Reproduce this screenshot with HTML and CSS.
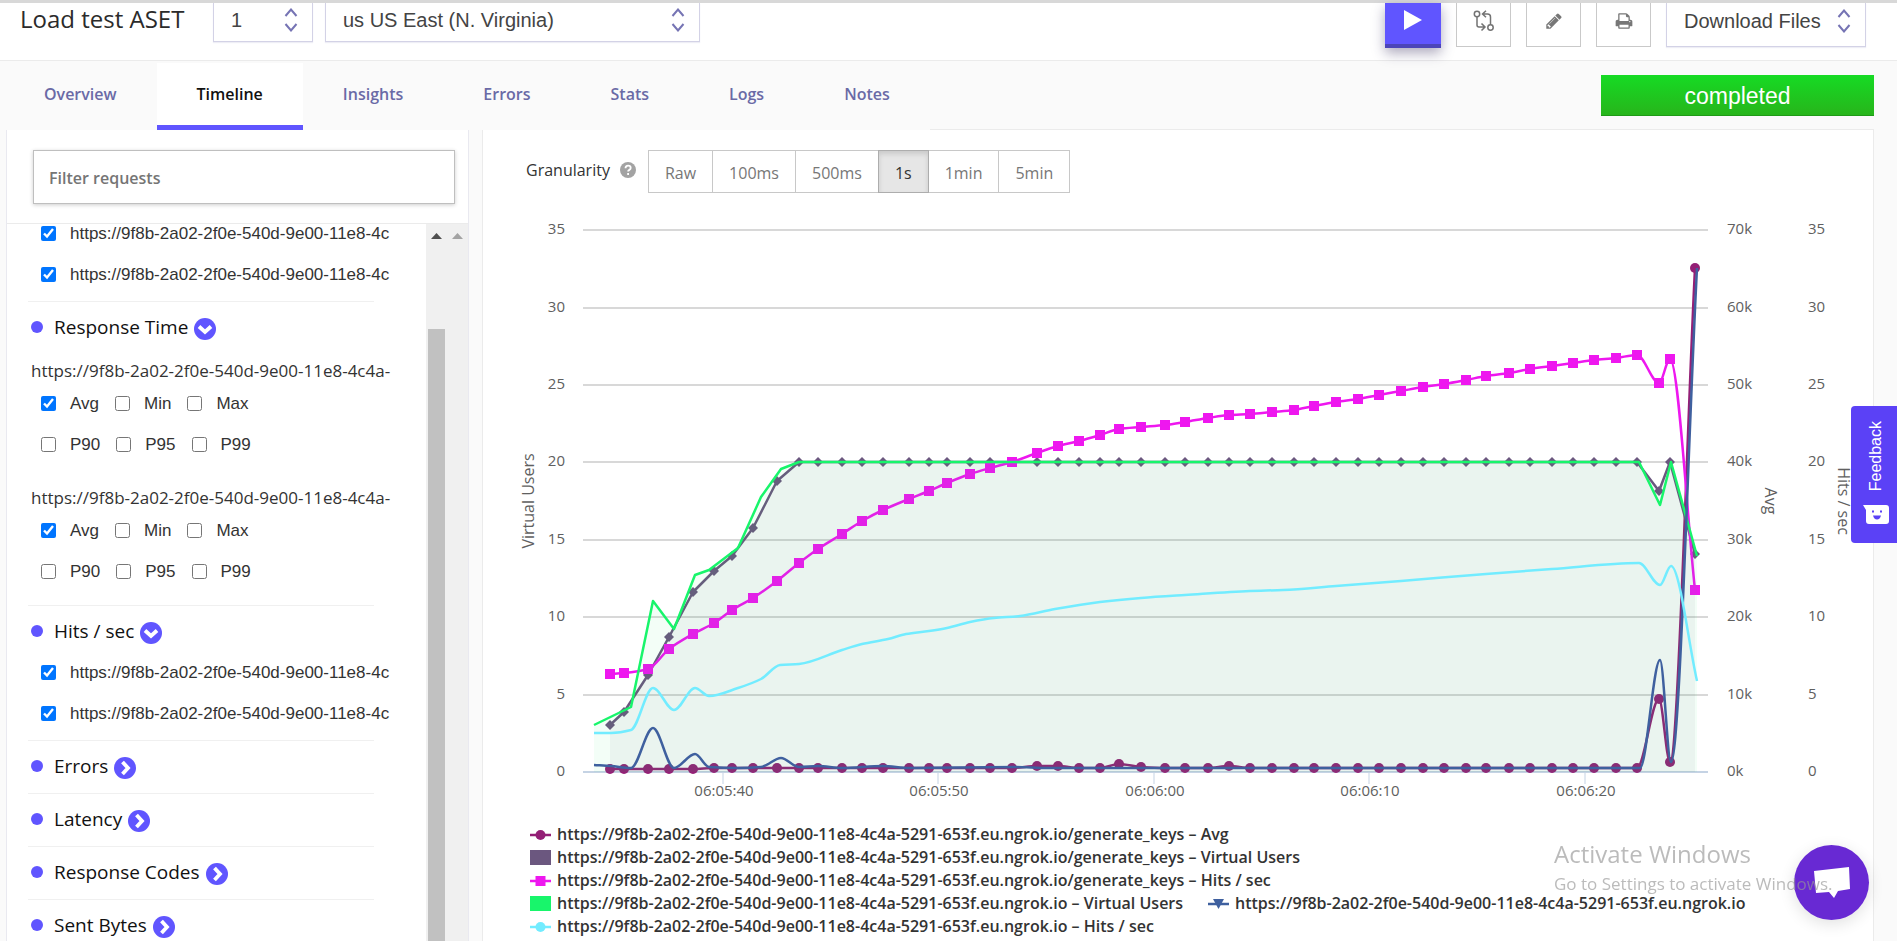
FILE: index.html
```html
<!DOCTYPE html>
<html lang="en">
<head>
<meta charset="utf-8">
<title>Load test ASET</title>
<link rel="stylesheet" href="styles.css">
</head>
<body>
<svg class="defs" aria-hidden="true">
  <symbol id="updown" viewBox="0 0 14 24"><path d="M1.500 8 7 1.500 12.500 8M1.500 16 7 22.500 12.500 16" fill="none" stroke="#7674b4" stroke-width="2"/></symbol>
  <symbol id="down" viewBox="0 0 22 22"><circle cx="11" cy="11" r="11" fill="#6055ff"/><path d="M5 8.500 11 14l6-5.500" fill="none" stroke="#fff" stroke-width="3.800"/></symbol>
  <symbol id="right" viewBox="0 0 22 22"><circle cx="11" cy="11" r="11" fill="#6055ff"/><path d="M8.500 5 14 11l-5.500 6" fill="none" stroke="#fff" stroke-width="3.800"/></symbol>
</svg>

<header class="topbar">
  <h1 class="title">Load test ASET</h1>
  <div class="picker picker-run">
    <select aria-label="Run"><option>1</option></select>
    <svg class="updown"><use href="#updown"/></svg>
  </div>
  <div class="picker picker-region">
    <select aria-label="Region"><option>us US East (N. Virginia)</option></select>
    <svg class="updown"><use href="#updown"/></svg>
  </div>
  <div class="actions">
    <button class="play" aria-label="Run test"><svg width="20" height="22" viewBox="0 0 20 22"><path d="M1 1v20L19 11z" fill="#fff"/></svg></button>
    <button class="tool" aria-label="Compare"><svg width="22" height="22" viewBox="0 0 22 22" fill="none" stroke="#737373" stroke-width="1.500"><circle cx="4" cy="4" r="2.700"/><circle cx="17.500" cy="17.500" r="2.700"/><path d="M4 7v8q0 2 2 2h5M8.500 13.500l3.500 3.500-3.500 3.500M17.500 15V7q0-3-3-3H10M13 .7 9.500 4 13 7.300"/></svg></button>
    <button class="tool" aria-label="Edit"><svg width="18" height="18" viewBox="0 0 1792 1792" fill="#777"><path d="M491 1536l91-91-235-235-91 91v107h128v128h107zM1014 608q0-22-22-22-10 0-17 7l-542 542q-7 7-7 17 0 22 22 22 10 0 17-7l542-542q7-7 7-17zM960 416l416 416-832 832h-416v-416zM1643 512q0 53-37 90l-166 166-416-416 166-165q36-38 90-38 53 0 91 38l235 234q37 39 37 91z"/></svg></button>
    <button class="tool" aria-label="Print"><svg width="18" height="18" viewBox="0 0 1792 1792" fill="#777"><path d="M448 1536h896v-256h-896v256zM448 896h896v-384h-160q-40 0-68-28t-28-68v-160h-640v640zM1536 960q0-26-19-45t-45-19-45 19-19 45 19 45 45 19 45-19 19-45zM1728 960v416q0 13-9.500 22.500t-22.500 9.500h-224v160q0 40-28 68t-68 28h-960q-40 0-68-28t-28-68v-160h-224q-13 0-22.500-9.500t-9.500-22.500v-416q0-79 56.500-135.500t135.500-56.500h64v-544q0-40 28-68t68-28h672q40 0 88 20t76 48l152 152q28 28 48 76t20 88v256h64q79 0 135.500 56.500t56.500 135.500z"/></svg></button>
    <div class="picker picker-files">
      <select aria-label="Download files"><option>Download Files</option></select>
      <svg class="updown"><use href="#updown"/></svg>
    </div>
  </div>
</header>

<div class="tabbar">
  <nav class="tabs">
    <a href="#">Overview</a>
    <a href="#" class="current">Timeline</a>
    <a href="#">Insights</a>
    <a href="#">Errors</a>
    <a href="#">Stats</a>
    <a href="#">Logs</a>
    <a href="#">Notes</a>
  </nav>
  <div class="status">completed</div>
</div>

<main class="content">
  <aside class="sidebar">
    <div class="filter"><input type="text" placeholder="Filter requests" aria-label="Filter requests"></div>
    <div class="scroller">
      <div class="metrics">
        <section class="metric scrolled">
          <div class="row"><label><input type="checkbox" checked>https://9f8b-2a02-2f0e-540d-9e00-11e8-4c</label></div>
          <div class="row"><label><input type="checkbox" checked>https://9f8b-2a02-2f0e-540d-9e00-11e8-4c</label></div>
        </section>
        <section class="metric grouped">
          <h2>Response Time<button aria-label="Collapse"><svg width="22" height="22"><use href="#down"/></svg></button></h2>
          <div class="group">
            <h3>https://9f8b-2a02-2f0e-540d-9e00-11e8-4c4a-</h3>
            <div class="row"><label><input type="checkbox" checked>Avg</label><label><input type="checkbox">Min</label><label><input type="checkbox">Max</label></div>
            <div class="row"><label><input type="checkbox">P90</label><label><input type="checkbox">P95</label><label><input type="checkbox">P99</label></div>
          </div>
          <div class="group">
            <h3>https://9f8b-2a02-2f0e-540d-9e00-11e8-4c4a-</h3>
            <div class="row"><label><input type="checkbox" checked>Avg</label><label><input type="checkbox">Min</label><label><input type="checkbox">Max</label></div>
            <div class="row"><label><input type="checkbox">P90</label><label><input type="checkbox">P95</label><label><input type="checkbox">P99</label></div>
          </div>
        </section>
        <section class="metric">
          <h2>Hits / sec<button aria-label="Collapse"><svg width="22" height="22"><use href="#down"/></svg></button></h2>
          <div class="row"><label><input type="checkbox" checked>https://9f8b-2a02-2f0e-540d-9e00-11e8-4c</label></div>
          <div class="row"><label><input type="checkbox" checked>https://9f8b-2a02-2f0e-540d-9e00-11e8-4c</label></div>
        </section>
        <section class="metric"><h2>Errors<button aria-label="Expand"><svg width="22" height="22"><use href="#right"/></svg></button></h2></section>
        <section class="metric"><h2>Latency<button aria-label="Expand"><svg width="22" height="22"><use href="#right"/></svg></button></h2></section>
        <section class="metric"><h2>Response Codes<button aria-label="Expand"><svg width="22" height="22"><use href="#right"/></svg></button></h2></section>
        <section class="metric"><h2>Sent Bytes<button aria-label="Expand"><svg width="22" height="22"><use href="#right"/></svg></button></h2></section>
      </div>
      <div class="track">
        <svg width="11" height="6"><path d="M0 6 5.500 0 11 6z" fill="#505050"/></svg>
        <div class="thumb"></div>
      </div>
      <div class="track">
        <svg width="11" height="6"><path d="M0 6 5.500 0 11 6z" fill="#a3a3a3"/></svg>
      </div>
    </div>
  </aside>

  <section class="panel">
    <div class="granularity">
      <span class="caption">Granularity</span>
      <svg class="help" width="16" height="16" viewBox="0 0 16 16"><circle cx="8" cy="8" r="8" fill="#a3a3a3"/><path d="M5.500 6.300q0-2.600 2.600-2.600t2.600 2.300q0 1.200-1.300 1.900T8.100 9.600M8.100 11v2" fill="none" stroke="#fff" stroke-width="1.800"/></svg>
      <div class="segmented">
        <button>Raw</button><button>100ms</button><button>500ms</button><button class="active">1s</button><button>1min</button><button>5min</button>
      </div>
    </div>
    <svg class="chart" id="chart" viewBox="483 205 1390 610" role="img" aria-label="Virtual users, response time and hits per second"></svg>
    <ul class="legend">
      <li><span><svg width="21" height="16"><path d="M0 8h21" stroke="#941f76" stroke-width="2.500"/><circle cx="10.500" cy="8" r="5" fill="#941f76"/></svg>https://9f8b-2a02-2f0e-540d-9e00-11e8-4c4a-5291-653f.eu.ngrok.io/generate_keys – Avg</span></li>
      <li><span><svg width="21" height="16"><path d="M0 0h21v15H0z" fill="#6b577f"/></svg>https://9f8b-2a02-2f0e-540d-9e00-11e8-4c4a-5291-653f.eu.ngrok.io/generate_keys – Virtual Users</span></li>
      <li><span><svg width="21" height="16"><path d="M0 8h21" stroke="#ee17ef" stroke-width="2.500"/><path d="M5.500 3h10v10h-10z" fill="#ee17ef"/></svg>https://9f8b-2a02-2f0e-540d-9e00-11e8-4c4a-5291-653f.eu.ngrok.io/generate_keys – Hits / sec</span></li>
      <li><span><svg width="21" height="16"><path d="M0 0h21v15H0z" fill="#18f56b"/></svg>https://9f8b-2a02-2f0e-540d-9e00-11e8-4c4a-5291-653f.eu.ngrok.io – Virtual Users</span><span><svg width="21" height="16"><path d="M0 8h21" stroke="#3f609f" stroke-width="2.500"/><path d="M5 3h11l-5.500 10z" fill="#3f609f"/></svg>https://9f8b-2a02-2f0e-540d-9e00-11e8-4c4a-5291-653f.eu.ngrok.io</span></li>
      <li><span><svg width="21" height="16"><path d="M0 8h21" stroke="#72ecff" stroke-width="2.500"/><circle cx="10.500" cy="8" r="5" fill="#72ecff"/></svg>https://9f8b-2a02-2f0e-540d-9e00-11e8-4c4a-5291-653f.eu.ngrok.io – Hits / sec</span></li>
    </ul>
  </section>
</main>

<button class="feedback">
  <span>Feedback</span>
  <svg width="26" height="19" viewBox="0 0 26 19"><path d="M0 0h23q3 0 3 3v13q0 3-3 3H6q-3 0-3-3V5z" fill="#fff"/><path d="M9 6.500h2M17 6.500h2" stroke="#5b41f6" stroke-width="2"/><path d="M10 10.500h8q-1 4-4 4t-4-4z" fill="#5b41f6"/></svg>
</button>
<button class="chat" aria-label="Open chat"><svg width="36" height="32" viewBox="0 0 36 32"><path d="M0 4 35 0 36 22 24 24 20 31 15 25 2 26z" fill="#fff"/></svg></button>
<div class="watermark"><p class="watermark-title">Activate Windows</p><p>Go to Settings to activate Windows.</p></div>
<script src="chart.js"></script>
</body>
</html>
```
FILE: styles.css
```css
* { box-sizing: border-box; }

body {
  margin: 0;
  height: 100vh;
  display: flex;
  flex-direction: column;
  overflow: hidden;
  background: #fafafa;
  color: #333;
  font-family: "Open Sans", "Noto Sans", sans-serif;
}

h1, h2, h3, p, ul { margin: 0; padding: 0; font-weight: 400; }
button { margin: 0; padding: 0; font: inherit; }
.defs { display: none; }

/* Top bar */
.topbar {
  flex: none;
  display: flex;
  align-items: flex-start;
  height: 61px;
  padding: 0 31px 0 20px;
  border-top: 3px solid #d8d8d8;
  border-bottom: 1px solid #ebebeb;
  background: #fff;
}
.title {
  width: 193px;
  font-size: 24px;
  line-height: 32px;
  font-weight: 500;
  white-space: nowrap;
  color: #2b2b2b;
}
.picker { position: relative; }
.picker select {
  display: block;
  width: 100%;
  height: 100%;
  padding: 0 17px;
  appearance: none;
  border: 1px solid #d3d2e6;
  border-top: 0;
  border-radius: 0;
  background: #fff;
  box-shadow: 0 1px 1px #eeeef5;
  font: 20px "Liberation Sans", Arial, sans-serif;
  color: #444;
}
.updown {
  position: absolute;
  top: 5px;
  right: 15px;
  width: 14px;
  height: 24px;
  pointer-events: none;
}
.picker-run { width: 100px; height: 39px; margin-right: 12px; }
.picker-run select, .picker-region select { padding-bottom: 5px; }
.picker-region { width: 375px; height: 39px; }
.picker-files { width: 200px; height: 44px; }
.picker-files select { padding-bottom: 8px; }
.picker-files .updown { top: 6px; }
.actions { display: flex; gap: 15px; margin-left: auto; }
.play, .tool { display: flex; justify-content: center; }
.play {
  width: 56px;
  height: 45px;
  padding-top: 6px;
  border: 0;
  border-bottom: 4px solid #4c45b8;
  background: #6055ff;
  box-shadow: 0 5px 12px rgba(50, 40, 90, .4);
}
.tool {
  width: 55px;
  height: 44px;
  padding-bottom: 8px;
  align-items: center;
  border: 1px solid #c9c9c9;
  border-top: 0;
  background: #fff;
}

/* Tabs */
.tabbar {
  flex: none;
  display: flex;
  justify-content: space-between;
  height: 69px;
  padding: 2px 23px 0 4px;
}
.tabs {
  position: relative;
  z-index: 1;
  display: flex;
  background: #fafafa;
}
.tabs a {
  padding: 0 40px;
  font-size: 16px;
  line-height: 63px;
  font-weight: 600;
  text-decoration: none;
  color: #6a6aa6;
}
.tabs .current {
  border-bottom: 5px solid #6055ff;
  background: #fff;
  color: #111;
}
.status {
  align-self: flex-start;
  width: 273px;
  height: 41px;
  margin-top: 12px;
  border-bottom: 1px solid #1f9a17;
  background: linear-gradient(#16db24, #27b51b);
  font: 23px/42px "Liberation Sans", Arial, sans-serif;
  text-align: center;
  color: #fff;
}

/* Layout */
.content {
  flex: 1;
  min-height: 0;
  display: flex;
  gap: 13px;
  margin-top: -1px;
  padding: 0 23px 0 6px;
}

/* Sidebar */
.sidebar {
  flex: none;
  width: 463px;
  display: flex;
  flex-direction: column;
  border: solid #e9e9f0;
  border-width: 0 1px;
  background: #fff;
}
.filter { padding: 21px 13px 19px 26px; border-bottom: 1px solid #ebebeb; }
.filter input {
  display: block;
  width: 100%;
  height: 54px;
  padding: 1px 15px 0;
  border: 1px solid #bfbfbf;
  box-shadow: 0 1px 4px rgba(0, 0, 0, .2);
  font: 600 16px "Open Sans", sans-serif;
  color: #333;
}
.filter input::placeholder { color: #757575; }
.scroller { flex: 1; min-height: 0; display: flex; overflow: hidden; }
.metrics { flex: 1; min-width: 0; padding: 0 21px; }
.metric {
  position: relative;
  padding: 0 0 6px 3px;
}
.metric::after {
  content: "";
  display: block;
  margin: 6px 31px -7px -3px;
  border-bottom: 1px solid #f0f0f0;
}
.metric + .metric { padding-top: 1px; }
.scrolled { margin-top: -11px; }
.grouped { padding-bottom: 13px; }
.grouped::after { margin: 13px 31px -14px -3px; }
.metric h2 {
  display: flex;
  align-items: center;
  height: 46px;
  padding-top: 4px;
  font-size: 19px;
  color: #111;
}
.metric h2::before {
  content: "";
  width: 12px;
  height: 12px;
  margin-right: 11px;
  border-radius: 50%;
  background: #6055ff;
}
.metric h2 button {
  display: flex;
  margin: 4px 0 0 6px;
  border: 0;
  background: none;
}
.metric h3 {
  padding-top: 10px;
  font-size: 17px;
  line-height: 25px;
  font-weight: 500;
  white-space: nowrap;
}
.group + .group { padding-top: 10px; }
.row {
  display: flex;
  gap: 16px;
  height: 41px;
  padding-left: 10px;
  font: 17px "Liberation Sans", Arial, sans-serif;
  white-space: nowrap;
}
.row label { display: flex; align-items: center; gap: 14px; }
.row input { flex: none; width: 15px; height: 15px; margin: 0; }
.track {
  flex: none;
  width: 21px;
  display: flex;
  flex-direction: column;
  align-items: center;
  padding-top: 9px;
  background: #f0f0f0;
}
.thumb { flex: 1; width: 17px; margin-top: 90px; background: #c1c1c1; }

/* Chart panel */
.panel {
  flex: 1;
  min-width: 0;
  border: 1px solid #ebebeb;
  border-bottom: 0;
  background: #fff;
}
.granularity { display: flex; align-items: center; padding: 20px 43px 0; }
.caption { font-size: 16px; padding-bottom: 4px; }
.help { margin: 0 13px 4px 10px; }
.segmented { display: flex; }
.segmented button {
  height: 43px;
  margin-left: -1px;
  padding: 2px 16px 0;
  border: 1px solid #c8c8c8;
  background: #fff;
  font-size: 16px;
  color: #777;
}
.segmented .active {
  z-index: 1;
  border-color: #adadad;
  background: #e6e6e6;
  box-shadow: inset 0 3px 5px rgba(0, 0, 0, .125);
  color: #333;
}
.chart { display: block; width: 100%; margin-top: 12px; overflow: hidden; }
.grid { stroke: #d8d8d8; stroke-width: 2; }
.axis { stroke: #c5d3e4; stroke-width: 2; }
.tick { font-size: 15px; fill: #606060; }
.axis-title { font-size: 16px; fill: #606060; text-anchor: middle; }
.line { fill: none; stroke-width: 2.5; stroke-linejoin: round; }
.end { text-anchor: end; }
.mid { text-anchor: middle; }

.legend { list-style: none; padding: 8px 0 0 47px; }
.legend li {
  display: flex;
  gap: 25px;
  font-size: 16px;
  line-height: 23px;
  font-weight: 600;
  color: #333;
  white-space: nowrap;
}
.legend span { display: flex; align-items: center; gap: 6px; }

/* Floating widgets */
.feedback {
  position: fixed;
  top: 406px;
  right: 0;
  width: 46px;
  height: 137px;
  display: flex;
  flex-direction: column;
  align-items: center;
  justify-content: space-between;
  padding: 15px 0 19px 4px;
  border: 0;
  border-radius: 4px 0 0 4px;
  background: #5b41f6;
  color: #fff;
  font: 16px "Liberation Sans", Arial, sans-serif;
}
.feedback span { writing-mode: vertical-rl; transform: rotate(180deg); }
.chat {
  position: fixed;
  right: 28px;
  bottom: 21px;
  width: 75px;
  height: 75px;
  display: flex;
  align-items: center;
  justify-content: center;
  border: 0;
  border-radius: 50%;
  background: #6829d3;
  box-shadow: 0 4px 16px rgba(0, 0, 0, .12);
}
.watermark {
  position: fixed;
  right: 58px;
  bottom: 45px;
  pointer-events: none;
  font-size: 17px;
  line-height: 24px;
  color: rgba(150, 150, 150, .65);
  width: 285px;
  white-space: nowrap;
}
.watermark-title { font-size: 24px; line-height: 36px; }
```
FILE: chart.js
```js
const svg = document.getElementById('chart');
const NS = 'http://www.w3.org/2000/svg';
const BASE = 772;

function add(name, attrs, text) {
  const el = document.createElementNS(NS, name);
  for (const key in attrs) el.setAttribute(key, attrs[key]);
  if (text) el.textContent = text;
  svg.appendChild(el);
}

// Monotone cubic curve through the points
function spline(pts) {
  const n = pts.length, slope = [], tan = [];
  for (let i = 0; i < n - 1; i++) slope.push((pts[i + 1][1] - pts[i][1]) / (pts[i + 1][0] - pts[i][0]));
  tan[0] = slope[0];
  tan[n - 1] = slope[n - 2];
  for (let i = 1; i < n - 1; i++) {
    const a = slope[i - 1], b = slope[i];
    tan[i] = a * b <= 0 ? 0 : 2 * a * b / (a + b);
  }
  let d = 'M' + pts[0];
  for (let i = 0; i < n - 1; i++) {
    const h = (pts[i + 1][0] - pts[i][0]) / 3;
    d += 'C' + [pts[i][0] + h, pts[i][1] + tan[i] * h, pts[i + 1][0] - h, pts[i + 1][1] - tan[i + 1] * h, pts[i + 1][0], pts[i + 1][1]];
  }
  return d;
}
const straight = pts => 'M' + pts.join('L');

function area(pts, color, opacity) {
  add('path', { d: straight(pts) + `L${pts[pts.length - 1][0]},${BASE}L${pts[0][0]},${BASE}z`, fill: color, 'fill-opacity': opacity });
}
const line = (d, color) => add('path', { d, class: 'line', stroke: color });

// Axes
for (let i = 0; i <= 7; i++) {
  const y = Math.round(BASE - i * 77.4);
  add('path', { d: `M583 ${y}H1708`, class: i ? 'grid' : 'axis' });
  const ty = y + 4;
  add('text', { x: 565, y: ty, class: 'tick end' }, String(i * 5));
  add('text', { x: 1727, y: ty, class: 'tick' }, i * 10 + 'k');
  add('text', { x: 1808, y: ty, class: 'tick' }, String(i * 5));
}
['06:05:40', '06:05:50', '06:06:00', '06:06:10', '06:06:20'].forEach((label, i) => {
  const x = Math.round(722.5 + i * 215.5);
  add('path', { d: `M${x} ${BASE}v12`, stroke: '#c5d3e4', 'stroke-width': 1 });
  add('text', { x: x + 1, y: 796, class: 'tick mid' }, label);
});
add('text', { transform: 'translate(534 501) rotate(-90)', class: 'axis-title' }, 'Virtual Users');
add('text', { transform: 'translate(1765 501) rotate(90)', class: 'axis-title' }, 'Avg');
add('text', { transform: 'translate(1838 501) rotate(90)', class: 'axis-title' }, 'Hits / sec');

const xs = [610, 624, 648, 669, 693, 714, 732, 753, 777, 799, 818, 842, 862, 883, 909, 929, 947, 970, 990, 1012, 1037, 1058, 1079, 1100, 1119, 1141, 1165, 1185, 1208, 1229, 1250, 1272, 1294, 1314, 1336, 1358, 1379, 1401, 1423, 1444, 1466, 1486, 1509, 1530, 1552, 1573, 1594, 1616, 1637, 1659, 1670, 1695];
const hitsY = [674, 673, 669, 649, 634, 623, 610, 598, 581, 563, 549, 534, 521, 510, 499, 491, 483, 474, 468, 462, 453, 446, 441, 435, 429, 427, 425, 422, 418, 415, 414, 412, 410, 406, 402, 399, 395, 391, 387, 384, 380, 376, 373, 369, 366, 363, 360, 358, 355, 383, 359, 590];
const usersStart = [725, 712, 675, 637, 592, 571, 556, 528, 481];
const avgSpecial = { 20: 766, 21: 766, 24: 764, 25: 767, 29: 766, 49: 699, 50: 762, 51: 268 };

const hits = xs.map((x, i) => [x, hitsY[i]]);
const users = xs.map((x, i) => [x, usersStart[i] || { 49: 491, 51: 554 }[i] || 462]);
const avg = xs.map((x, i) => [x, avgSpecial[i] || (i < 5 ? 769 : 768)]);

const users2 = [[594, 725], [631, 707], [653, 601], [674, 629], [695, 575], [709, 570], [738, 548], [761, 497], [781, 469], [799, 462], [1639, 462], [1660, 505], [1671, 462], [1697, 556]];
const hits2 = [[594, 733], [611, 733], [631, 730], [653, 688], [674, 710], [695, 688], [709, 696], [738, 688], [761, 679], [780, 665], [799, 664], [842, 650], [862, 644], [888, 639], [906, 634], [929, 631], [947, 628], [970, 622], [994, 618], [1020, 616], [1055, 609], [1100, 602], [1141, 598], [1185, 595], [1250, 591], [1283, 590], [1336, 586], [1401, 581], [1486, 574], [1552, 569], [1639, 563], [1660, 585], [1671, 566], [1697, 681]];
const avg2 = [[594, 765], [611, 766], [631, 768], [653, 728], [674, 768], [695, 754], [709, 767], [738, 768], [761, 767], [781, 758], [799, 767], [818, 766], [842, 768], [883, 766], [909, 768], [1016, 767], [1047, 768], [1640, 768], [1660, 660], [1671, 762], [1697, 268]];

line(spline(avg), '#941f76');
avg.forEach(([x, y]) => add('circle', { cx: x, cy: y, r: 5, fill: '#941f76' }));

area(users, '#6b577f', .06);
line(straight(users), '#6b577f');
users.forEach(([x, y]) => add('path', { d: `M${x} ${y - 5}l5 5-5 5-5-5z`, fill: '#6b577f' }));

line(spline(hits), '#ee17ef');
hits.forEach(([x, y]) => add('rect', { x: x - 5, y: y - 5, width: 10, height: 10, fill: '#ee17ef' }));

area(users2, '#18f56b', .05);
line(straight(users2), '#18f56b');
line(spline(avg2), '#3f609f');
line(spline(hits2), '#72ecff');
```
